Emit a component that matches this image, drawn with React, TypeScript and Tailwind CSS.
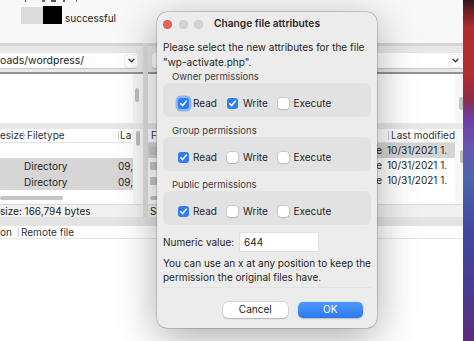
import React from "react";

function Check({ checked, focus }: { checked: boolean; focus?: boolean }) {
  if (checked) {
    return (
      <span
        className={
          focus
            ? "flex h-[11px] w-[11px] shrink-0 items-center justify-center rounded-[3px] bg-[#2f7df6] shadow-[0_0_0_2.5px_#8db6f6]"
            : "flex h-[11px] w-[11px] shrink-0 items-center justify-center rounded-[3px] bg-[#2f7df6]"
        }
      >
        <svg width="9" height="9" viewBox="0 0 9 9">
          <path d="M1.8 4.7 L3.7 6.6 L7.2 2.2" fill="none" stroke="white" strokeWidth="1.6" strokeLinecap="round" strokeLinejoin="round" />
        </svg>
      </span>
    );
  }
  return <span className="h-[11px] w-[11px] shrink-0 rounded-[3px] bg-white shadow-[0_0_0_0.5px_rgba(0,0,0,0.18),0_0.5px_1.5px_rgba(0,0,0,0.18)]" />;
}

function PermBox({ label, r, w, first }: { label: string; r: boolean; w: boolean; first?: boolean }) {
  return (
    <>
      <div className={first ? "mt-[1px] h-[12px] shrink-0 pl-[9px] text-[9.5px] leading-[12px] text-[#3c3c3c]" : "mt-[8px] h-[12px] shrink-0 pl-[9px] text-[9.5px] leading-[12px] text-[#3c3c3c]"}>
        {label}
      </div>
      <div className="flex h-[34px] shrink-0 items-center rounded-[6px] bg-[#e2e2e2] pl-[14.5px] pt-[6px] leading-[14px]">
        <div className="flex w-[49.5px] items-center gap-[4.5px]">
          <Check checked={r} focus={first} />
          <span>Read</span>
        </div>
        <div className="flex w-[51px] items-center gap-[5px]">
          <Check checked={w} />
          <span>Write</span>
        </div>
        <div className="flex items-center gap-[4.5px]">
          <Check checked={false} />
          <span>Execute</span>
        </div>
      </div>
    </>
  );
}

function Chevron() {
  return (
    <svg width="7" height="5" viewBox="0 0 7 5">
      <path d="M1 1.2 L3.5 3.7 L6 1.2" fill="none" stroke="#333" strokeWidth="1.3" strokeLinecap="round" strokeLinejoin="round" />
    </svg>
  );
}

export default function App() {
  return (
    <div className="relative h-[341px] w-[474px] overflow-hidden bg-white font-[Inter,sans-serif] text-[10px] text-[#1e1e1e]">
      <div className="flex h-full">
        {/* App window */}
        <div className="flex w-[463px] shrink-0 flex-col bg-white">
          {/* message log */}
          <div className="flex h-[43px] shrink-0 flex-col bg-[#f8f8f8]">
            <div className="flex h-[3px] items-start">
              <span className="ml-[25px] h-[2px] w-[1px] bg-[#555]" />
              <span className="ml-[16px] h-[2px] w-[3px] bg-[#666]" />
              <span className="ml-[6px] h-[2px] w-[5px] bg-[#555]" />
              <span className="ml-[7px] h-[2px] w-[2px] bg-[#666]" />
              <span className="ml-[11px] h-[2px] w-[1px] bg-[#777]" />
            </div>
            <div className="mt-[3px] flex items-end pl-[21px]">
              <span className="h-[17px] w-[22px] bg-[#dcdcdc]" />
              <span className="h-[18px] w-[19px] bg-black" />
              <span className="ml-[3px] text-[10px] leading-[12px] text-[#222]">successful</span>
            </div>
          </div>

          {/* panes */}
          <div className="flex h-[174px] shrink-0">
            {/* left pane */}
            <div className="flex w-[143px] flex-col">
              <div className="h-[29px] shrink-0 border-t-[3px] border-[#d5d5d5] bg-[#e8e8e8] pt-[7px] pr-[5px]">
                <div className="flex h-[15px] items-center justify-between rounded-r-[3px] bg-white pr-[1px] shadow-[0_0.5px_1px_rgba(0,0,0,0.15)]">
                  <span className="whitespace-nowrap text-[10.5px] leading-[15px] text-[#1e1e1e]">oads/wordpress/</span>
                  <span className="flex h-[12px] w-[12px] items-center justify-center rounded-[3px] bg-white shadow-[0_0_1.5px_rgba(0,0,0,0.3)]">
                    <Chevron />
                  </span>
                </div>
              </div>
              <div className="h-[2px] shrink-0 bg-[#939393]" />
              <div className="flex h-[49px] shrink-0 bg-white">
                <div className="flex-1" />
                <div className="w-[10px] bg-[#f6f6f6] pl-[2px] pt-[14px]">
                  <div className="h-[14px] w-[4px] rounded-full bg-[#bdbdbd]" />
                </div>
              </div>
              <div className="h-[6px] shrink-0 bg-[#e8e8e8]" />
              <div className="flex h-[75px] shrink-0 bg-white">
                <div className="flex flex-1 flex-col">
                  <div className="flex h-[14px] shrink-0 items-center whitespace-nowrap border-b border-[#e4e4e4] text-[#333]">
                    <span className="w-[21px] text-right">esize</span>
                    <span className="ml-[2px] h-[9px] w-px bg-[#cfcfcf]" />
                    <span className="w-[94px] pl-[3px]">Filetype</span>
                    <span className="h-[9px] w-px bg-[#cfcfcf]" />
                    <span className="pl-[1px]">La</span>
                  </div>
                  <div className="h-[15px] shrink-0" />
                  <div className="flex h-[16px] shrink-0 items-center bg-[#d6d6d6]">
                    <span className="w-[118px] pl-[24px]">Directory</span>
                    <span>09,</span>
                  </div>
                  <div className="flex h-[16px] shrink-0 items-center bg-[#d6d6d6]">
                    <span className="w-[118px] pl-[24px]">Directory</span>
                    <span>09,</span>
                  </div>
                  <div className="mt-[6px] h-[4px] w-[63px] shrink-0 rounded-full bg-[#c4c4c4]" />
                </div>
                <div className="w-[11px] bg-[#f7f7f7] pl-[3px] pt-[2px]">
                  <div className="h-[15px] w-[4px] rounded-full bg-[#bdbdbd]" />
                </div>
              </div>
              <div className="flex h-[13px] shrink-0 items-center whitespace-nowrap border-t border-[#dadada] bg-[#f1f1f1] text-[10px]">
                size: 166,794 bytes
              </div>
            </div>

            {/* splitter */}
            <div className="w-[5px] shrink-0 bg-[#dedede]" />

            {/* right pane */}
            <div className="flex flex-1 flex-col">
              <div className="h-[29px] shrink-0 border-t-[3px] border-[#d5d5d5] bg-[#e8e8e8] pt-[7px] pl-[4px] pr-[1px]">
                <div className="flex h-[15px] items-center justify-end rounded-[3px] bg-white pr-[6px] shadow-[0_0.5px_1px_rgba(0,0,0,0.15)]">
                  <span className="flex h-[12px] w-[12px] items-center justify-center rounded-[3px] bg-white shadow-[0_0_1.5px_rgba(0,0,0,0.3)]">
                    <Chevron />
                  </span>
                </div>
              </div>
              <div className="h-[2px] shrink-0 bg-[#939393]" />
              <div className="flex h-[49px] shrink-0 bg-white">
                <div className="flex-1" />
                <div className="w-[13px] bg-[#f6f6f6] pl-[4px] pt-[23px]">
                  <div className="h-[13px] w-[5px] rounded-full bg-[#c4c4c4]" />
                </div>
              </div>
              <div className="h-[6px] shrink-0 bg-[#e8e8e8]" />
              <div className="flex h-[75px] shrink-0 bg-white">
                <div className="flex flex-1 flex-col">
                  <div className="flex h-[14px] shrink-0 items-center whitespace-nowrap border-b border-[#e4e4e4] text-[#333]">
                    <span className="w-[240px] pl-[3px]">F</span>
                    <span className="h-[9px] w-px bg-[#cfcfcf]" />
                    <span className="pl-[2px]">Last modified</span>
                  </div>
                  {[0, 1, 2].map((i) => (
                    <div key={i} className={i === 0 ? "flex h-[15px] shrink-0 items-center whitespace-nowrap bg-[#d4d4d4]" : "flex h-[15px] shrink-0 items-center whitespace-nowrap"}>
                      <span className="ml-[2px] h-[8px] w-[7px] rounded-[1px] bg-[#c9c9c9]" />
                      <span className="w-[225px] text-right">file</span>
                      <span className="w-[66px] overflow-hidden pl-[5px]">10/31/2021 1.</span>
                    </div>
                  ))}
                  <div className="ml-[2px] mt-[8px] h-[4px] w-[8px] shrink-0 rounded-full bg-[#c4c4c4]" />
                </div>
                <div className="w-[13px] bg-[#f7f7f7] pl-[5px] pt-[21px]">
                  <div className="h-[13px] w-[4px] rounded-full bg-[#bdbdbd]" />
                </div>
              </div>
              <div className="flex h-[13px] shrink-0 items-center whitespace-nowrap border-t border-[#dadada] bg-[#f1f1f1] pl-[2px]">
                Sel
              </div>
            </div>
          </div>

          {/* divider */}
          <div className="h-[9px] shrink-0 bg-[#e4e4e4]" />
          {/* queue header */}
          <div className="flex h-[13px] shrink-0 items-center whitespace-nowrap border-b border-[#e6e6e6] bg-white text-[#333]">
            <span className="w-[18px]">on</span>
            <span className="h-[9px] w-px bg-[#cfcfcf]" />
            <span className="pl-[2px]">Remote file</span>
          </div>
          <div className="flex-1 bg-white" />
        </div>

        {/* wallpaper */}
        <div className="flex-1 bg-[linear-gradient(to_bottom,#2a181b_0%,#6a1d22_3%,#b02b2f_8%,#b22d31_22%,#8e2c48_29%,#6c3fa8_35%,#6a56b2_43%,#4c66ad_52%,#4048a0_68%,#4a3a93_85%,#5e2c7a_100%)]" />
      </div>

      {/* Dialog */}
      <div className="absolute left-[157px] top-[12px] flex h-[316px] w-[220px] flex-col overflow-hidden rounded-[10px] bg-[#ececec] shadow-[0_0_0_0.5px_rgba(0,0,0,0.3),0_10px_40px_rgba(0,0,0,0.33)]">
        <div className="flex h-[24px] shrink-0 items-center">
          <div className="flex w-[50px] items-center gap-[6.5px] pl-[6px]">
            <span className="h-[9px] w-[9px] rounded-full bg-[#ec5f57] shadow-[inset_0_0_0_0.5px_rgba(0,0,0,0.15)]" />
            <span className="h-[9px] w-[9px] rounded-full bg-[#d3d3d3] shadow-[inset_0_0_0_0.5px_rgba(0,0,0,0.08)]" />
            <span className="h-[9px] w-[9px] rounded-full bg-[#d3d3d3] shadow-[inset_0_0_0_0.5px_rgba(0,0,0,0.08)]" />
          </div>
          <div className="flex-1 whitespace-nowrap text-center text-[10.2px] font-semibold text-[#2a2a2a]">Change file attributes</div>
          <div className="w-[50px]" />
        </div>
        <div className="flex flex-col px-[6px] pt-[4px] text-[10px]">
          <div className="shrink-0 whitespace-nowrap leading-[15px]">
            <div>Please select the new attributes for the file</div>
            <div>"wp-activate.php".</div>
          </div>
          <PermBox label="Owner permissions" r={true} w={true} first />
          <PermBox label="Group permissions" r={true} w={false} />
          <PermBox label="Public permissions" r={true} w={false} />
          <div className="mt-[8px] flex h-[18px] shrink-0 items-center whitespace-nowrap">
            <span className="w-[77px]">Numeric value:</span>
            <div className="flex h-[18px] w-[78px] items-center bg-white pl-[4px] shadow-[0_0_0_0.5px_rgba(0,0,0,0.1)]">644</div>
          </div>
          <div className="mt-[5px] shrink-0 whitespace-nowrap leading-[14px]">
            <div>You can use an x at any position to keep the</div>
            <div>permission the original files have.</div>
          </div>
          <div className="mt-[2.5px] h-px shrink-0 bg-[#e2e2e2]" />
          <div className="mt-[14px] flex shrink-0 justify-end gap-[10.5px] pr-[8.5px]">
            <div className="flex h-[16px] w-[64.5px] items-center justify-center rounded-[5px] bg-white text-[#222] shadow-[0_0_0_0.5px_rgba(0,0,0,0.12),0_0.5px_1.5px_rgba(0,0,0,0.2)]">Cancel</div>
            <div className="flex h-[16px] w-[64.5px] items-center justify-center rounded-[5px] bg-[linear-gradient(to_bottom,#4f99fa,#2b77f0)] text-white shadow-[0_0.5px_1.5px_rgba(0,0,0,0.2)]">OK</div>
          </div>
        </div>
      </div>
    </div>
  );
}
